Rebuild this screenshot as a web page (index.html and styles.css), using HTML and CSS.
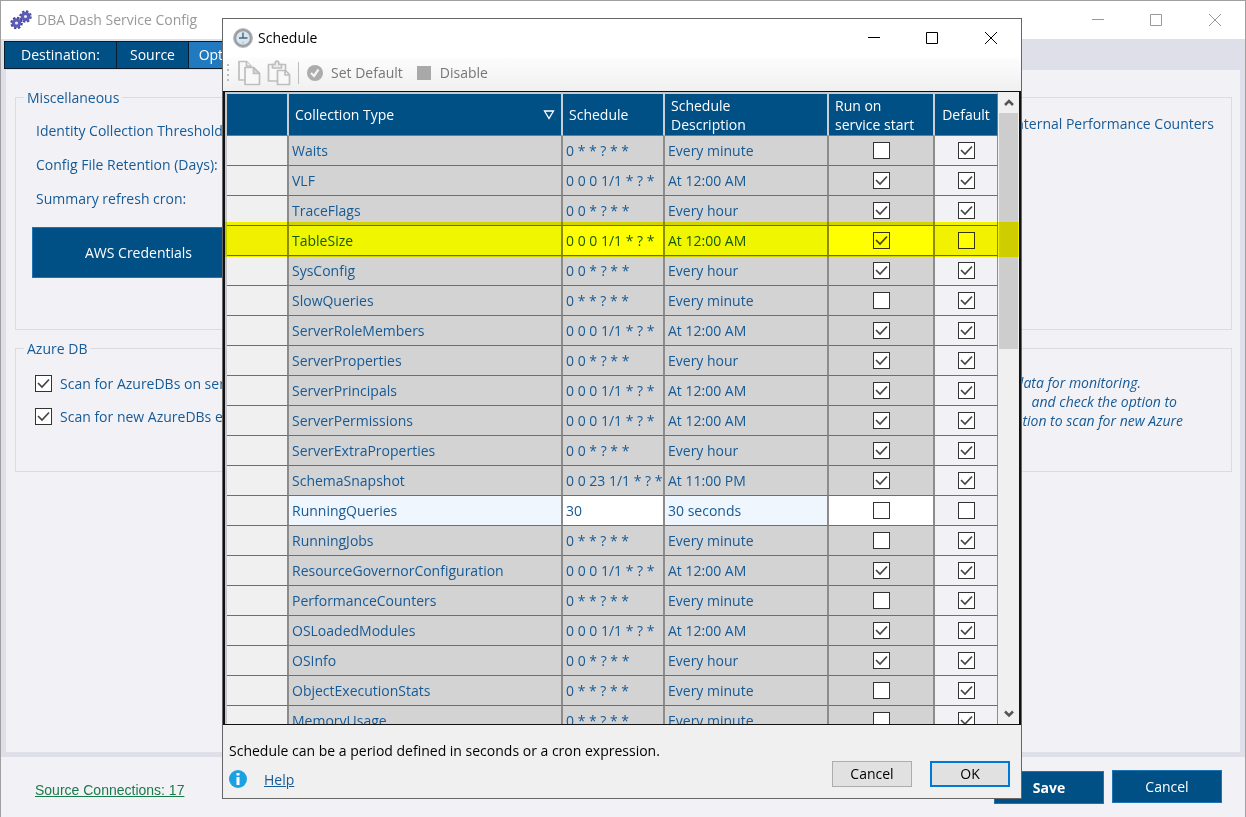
FILE: index.html
```html
<!DOCTYPE html>
<html lang="en">
<head>
<meta charset="utf-8">
<title>DBA Dash Service Config</title>
<link rel="stylesheet" href="styles.css">
</head>
<body>
<div class="app">
  <header class="titlebar">
    <svg class="app-icon" width="22" height="20" viewBox="0 0 22 20" aria-hidden="true">
      <circle cx="15.500" cy="6.500" r="5" fill="none" stroke="#4b4b9b" stroke-width="2.500" stroke-dasharray="2.200 1.720"/>
      <circle cx="15.500" cy="6.500" r="3.200" fill="#e4e4f6" stroke="#5c5cb8" stroke-width="3.200"/>
      <circle cx="6.500" cy="13" r="5" fill="none" stroke="#3f3f8c" stroke-width="2.500" stroke-dasharray="2.200 1.720"/>
      <circle cx="6.500" cy="13" r="3.200" fill="#e4e4f6" stroke="#5c5cb8" stroke-width="3.200"/>
    </svg>
    <h1 class="title">DBA Dash Service Config</h1>
    <div class="window-buttons">
      <button type="button" aria-label="Minimize"><svg width="14" height="14" viewBox="0 0 14 14"><path d="M1 6.500H13"/></svg></button>
      <button type="button" aria-label="Maximize"><svg width="14" height="14" viewBox="0 0 14 14"><path d="M1.500 1.500H12.500V12.500H1.500Z"/></svg></button>
      <button type="button" aria-label="Close"><svg width="14" height="14" viewBox="0 0 14 14"><path d="M1 1L13 13M13 1L1 13"/></svg></button>
    </div>
  </header>
  <nav class="tabs">
    <button type="button" class="tab tab-wide">Destination:</button>
    <button type="button" class="tab">Source</button>
    <button type="button" class="tab tab-active">Options</button>
  </nav>
  <main class="page">
    <fieldset class="group group-misc">
      <legend>Miscellaneous</legend>
      <div class="misc-left">
        <span>Identity Collection Threshold:</span>
        <span>Config File Retention (Days):</span>
        <span>Summary refresh cron:</span>
        <button type="button" class="primary aws">AWS Credentials</button>
      </div>
      <div class="misc-right">Internal Performance Counters</div>
    </fieldset>
    <fieldset class="group group-azure">
      <legend>Azure DB</legend>
      <div class="azure-left">
        <label><input type="checkbox" class="check" checked>Scan for AzureDBs on service start</label>
        <label><input type="checkbox" class="check" checked>Scan for new AzureDBs every</label>
      </div>
      <div class="azure-note">
        <div class="note-short">data for monitoring.</div>
        <div class="note-mid">and check the option to</div>
        <div>option to scan for new Azure</div>
      </div>
    </fieldset>
  </main>
  <footer class="footer">
    <a class="connections" href="#">Source Connections: 17</a>
    <div class="footer-actions">
      <button type="button" class="primary save">Save</button>
      <button type="button" class="primary">Cancel</button>
    </div>
  </footer>
</div>

<section class="dialog" role="dialog" aria-labelledby="dialog-title">
  <header class="titlebar dialog-titlebar">
    <svg class="dialog-icon" width="20" height="20" viewBox="0 0 20 20" aria-hidden="true">
      <circle cx="10" cy="10" r="8.200" fill="#d6e6f0" stroke="#9c9ea3" stroke-width="2.800"/>
      <circle cx="10" cy="10" r="9.400" fill="none" stroke="#b9bbbf"/>
      <path d="M10 4.500V10.500M6 10H14.500" fill="none" stroke="#4d6478" stroke-width="1.400"/>
      <path d="M10 13.500v2" stroke="#9db1c0"/>
    </svg>
    <h2 class="title" id="dialog-title">Schedule</h2>
    <div class="window-buttons">
      <button type="button" aria-label="Minimize"><svg width="14" height="14" viewBox="0 0 14 14"><path d="M1 6.500H13"/></svg></button>
      <button type="button" aria-label="Maximize"><svg width="14" height="14" viewBox="0 0 14 14"><path d="M1.500 1.500H12.500V12.500H1.500Z"/></svg></button>
      <button type="button" aria-label="Close"><svg width="14" height="14" viewBox="0 0 14 14"><path d="M1 1L13 13M13 1L1 13"/></svg></button>
    </div>
  </header>
  <div class="toolbar">
    <span class="grip"></span>
    <button type="button" aria-label="Copy"><svg width="24" height="26" viewBox="0 0 24 26" fill="#f8f8f8" stroke="#bebebe" stroke-width="1.700" stroke-linejoin="round"><path d="M8 20H2V1.500H9.500L14 6V8"/><path d="M9.500 1.500V6H14"/><path d="M8 7.500H16.500L22.500 13.500V24.500H8Z"/><path d="M16.500 7.500V13.500H22.500Z" fill="#d8d8d8"/></svg></button>
    <button type="button" aria-label="Paste"><svg width="24" height="26" viewBox="0 0 24 26" fill="#f8f8f8" stroke="#bebebe" stroke-width="1.700" stroke-linejoin="round"><path d="M1.500 4.500H18.500V21H1.500Z"/><path d="M5.500 8V4.500H8Q8 1.200 10 1.200T12 4.500H14.500V8Z" fill="#ececec"/><path d="M10.500 10.500H18.500L22.500 14.500V24.500H10.500Z"/><path d="M18 10.500V15H22.500" fill="none"/></svg></button>
    <span class="divider"></span>
    <button type="button" class="tool"><svg width="18" height="18" viewBox="0 0 18 18"><circle cx="9" cy="9" r="8" fill="#acacac"/><path d="M5 9L8 12L12.500 5.500" fill="none" stroke="#f4f4f4" stroke-width="2.200"/></svg>Set Default</button>
    <button type="button" class="tool"><span class="stop"></span>Disable</button>
  </div>
  <div class="grid">
    <div class="grid-body">
      <table>
        <colgroup><col class="c-head"><col><col class="c-schedule"><col class="c-desc"><col class="c-run"><col class="c-default"></colgroup>
        <thead>
          <tr><th></th><th><div class="sorted">Collection Type<svg width="12" height="10" viewBox="0 0 12 10"><path d="M1.500 1H10.500L6 8.500Z" fill="none" stroke="#fff" stroke-width="1.300"/></svg></div></th><th>Schedule</th><th>Schedule<br>Description</th><th>Run on<br>service start</th><th>Default</th></tr>
        </thead>
        <tbody id="rows"></tbody>
      </table>
    </div>
    <div class="scrollbar">
      <svg width="22" height="21" viewBox="0 0 22 21"><path d="M7 13L11 9L15 13" fill="none" stroke="#555" stroke-width="2.500"/></svg>
      <div class="track"><div class="thumb"></div></div>
      <svg width="22" height="21" viewBox="0 0 22 21"><path d="M7 8.500L11 12.500L15 8.500" fill="none" stroke="#555" stroke-width="2.500"/></svg>
    </div>
    <div class="marker"></div>
  </div>
  <footer class="dialog-footer">
    <p>Schedule can be a period defined in seconds or a cron expression.</p>
    <div class="dialog-actions">
      <div class="help">
        <svg width="18" height="18" viewBox="0 0 18 18" aria-hidden="true"><circle cx="9" cy="9" r="9" fill="#1ba1e2"/><path d="M9 3V5.500M9 7V15" stroke="#fff" stroke-width="3"/></svg>
        <a href="#">Help</a>
      </div>
      <button type="button" class="plain">Cancel</button>
      <button type="button" class="plain plain-ok">OK</button>
    </div>
  </footer>
</section>
<script src="rows.js"></script>
</body>
</html>
```

FILE: styles.css
```css
* { box-sizing: border-box; }
html, body { height: 100%; }
body {
  margin: 0;
  position: relative;
  overflow: hidden;
  font: 14px/19px "Open Sans", "Noto Sans", sans-serif;
  color: #165a96;
}
button { font: inherit; color: inherit; border: 0; padding: 0; background: none; }
h1, h2, p { margin: 0; font: inherit; }

.app {
  height: 100%;
  display: flex;
  flex-direction: column;
  background: #f2f2f6;
  border: 1px solid #a0a0a0;
  border-bottom: 0;
}
.titlebar {
  display: flex;
  align-items: center;
  height: 38px;
  padding-left: 9px;
  background: #fff;
  color: #999;
}
.title { flex: 1; padding: 0 0 2px 5px; }
.window-buttons { display: flex; }
.window-buttons button { width: 58px; height: 37px; display: grid; place-items: center; }
.window-buttons path { fill: none; stroke: currentColor; }
.window-buttons button:last-child { width: 60px; }

.tabs { display: flex; padding: 2px 3px; background: #dedfe9; height: 31px; }
.tab {
  height: 28px;
  width: 72px;
  padding-bottom: 2px;
  border: 1px solid #0a1c2b;
  border-left-width: 0;
  background: #004f85;
  color: #fff;
}
.tab-wide { width: 113px; border-left-width: 1px; }
.tab-active { background: #217abf; }

.page {
  flex: 1;
  min-height: 0;
  border: 5px solid #dedfe9;
  border-top: 0;
  padding: 18px 8px 0 9px;
}
.group {
  display: flex;
  justify-content: space-between;
  margin: 0;
  border: 1px solid #dcdcdc;
  white-space: nowrap;
}
.group legend { padding: 0 3px; margin-left: -8px; }
.group-misc { height: 242px; padding: 7px 17px 0 16px; }
.group-azure { height: 133px; margin-top: 9px; padding: 15px 48px 0 19px; }
.group-azure legend { margin-left: -11px; }
.misc-left { display: flex; flex-direction: column; gap: 15px; padding-top: 7px; }
.misc-left span { padding-left: 4px; }
.primary { padding-bottom: 1px; background: #004f85; color: #fff; border: 1px solid #1c74b4; }
.aws { width: 213px; height: 51px; margin-top: 4px; }
.azure-left { display: flex; flex-direction: column; gap: 14px; padding-top: 1px; }
.azure-left label { display: flex; align-items: center; gap: 8px; }
.azure-note { font-style: italic; text-align: right; }
.note-short { padding-right: 42px; }
.note-mid { padding-right: 6px; }

.check {
  appearance: none;
  display: block;
  width: 17px;
  height: 17px;
  margin: 0;
  border: 1px solid #333;
  background: #fff;
}
.check:checked {
  background: #fff url("data:image/svg+xml,%3Csvg xmlns='http://www.w3.org/2000/svg' viewBox='0 0 15 15'%3E%3Cpath d='M2 7L6 11L13 3.500' fill='none' stroke='%23444' stroke-width='1.700'/%3E%3C/svg%3E");
}

.footer { display: flex; justify-content: space-between; height: 60px; padding: 13px 23px 0 34px; }
.connections { font: 14px/40px "Liberation Sans", Arial, sans-serif; color: #1a7a4a; }
.footer-actions { display: flex; gap: 8px; }
.footer-actions .primary { width: 110px; height: 33px; }
.footer-actions .save { font-weight: 700; margin-top: 1px; }

.dialog {
  position: absolute;
  top: 18px;
  right: 224px;
  bottom: 18px;
  left: 222px;
  display: flex;
  flex-direction: column;
  background: #f0f0f0;
  border: 1px solid #666;
}
.dialog-titlebar { color: #000; padding-left: 10px; }

.toolbar {
  display: flex;
  align-items: center;
  gap: 6px;
  height: 34px;
  padding: 0 0 3px 4px;
  background: linear-gradient(#fdfdfd, #f0f0f0);
  color: #777;
}
.toolbar button { display: flex; align-items: center; gap: 7px; }
.grip { width: 2px; height: 18px; margin-right: 2px; background: repeating-linear-gradient(#bbb 0 2px, transparent 2px 5px); }
.divider { width: 1px; height: 22px; background: #bdbdbd; margin: 0 1px; }
.tool + .tool { margin-left: 8px; }
.tool .stop { margin-right: 2px; }
.stop { width: 14px; height: 14px; background: #a9a9a9; }

.grid {
  position: relative;
  flex: 1;
  min-height: 0;
  display: flex;
  border: 1px solid #111;
  border-left-width: 2px;
  border-right-width: 2px;
}
.grid-body { flex: 1; overflow: hidden; padding: 1px 0 0 2px; background: #c4c8cc; }
table { width: 100%; table-layout: fixed; border-collapse: separate; border-spacing: 0; }
.c-head { width: 62px; }
.c-schedule { width: 102px; }
.c-desc { width: 164px; }
.c-run { width: 106px; }
.c-default { width: 63px; }
th {
  height: 43px;
  padding: 0 6px;
  background: #004f85;
  color: #fff;
  font-weight: 400;
  text-align: left;
  border-top: 1px solid #c8ced3;
  border-bottom: 1px solid #777;
  border-right: 2px solid #c8ced3;
}
th:last-child { border-right: 1px solid #777; padding: 0; text-align: center; }
.sorted { display: flex; justify-content: space-between; align-items: center; }
td {
  height: 30px;
  padding: 0 3px 1px;
  background: #d3d3d3;
  border-right: 2px solid #8c8c8c;
  border-bottom: 1px solid #6e6e6e;
  white-space: nowrap;
}
td:first-child { background: #f0f0f0; }
td:last-child { background: #f2f2f6; border-right-width: 1px; }
td .check { margin: 0 auto; }
.custom td { background: #fff; }
.custom td:first-child { background: #f0f0f0; }
.custom td:nth-child(2), .custom td:nth-child(4) { background: #f0f6fd; }
.custom td:last-child { background: #f2f2f6; }

.scrollbar { display: flex; flex-direction: column; width: 21px; background: #f0f0f0; }
.track { flex: 1; }
.thumb { height: 40%; margin: 0 1px; background: #cdcdcd; }
.marker {
  position: absolute;
  top: 130px;
  left: 0;
  right: 0;
  height: 35px;
  background: #ff0;
  mix-blend-mode: multiply;
}

.dialog-footer { padding: 16px 11px 11px 6px; color: #000; }
.dialog-actions { display: flex; align-items: center; gap: 18px; height: 27px; }
.help { flex: 1; display: flex; align-items: center; gap: 17px; padding-top: 11px; }
.help a { color: #165a96; }
.plain { width: 80px; height: 26px; background: #e1e1e1; border: 1px solid #adadad; }
.plain-ok { border: 2px solid #0078d7; }
```

FILE: rows.js
```js
const MINUTE = ["0 * * ? * *", "Every minute"];
const HOUR = ["0 0 * ? * *", "Every hour"];
const DAY = ["0 0 0 1/1 * ? *", "At 12:00 AM"];

const rows = [
  ["Waits", MINUTE, false, true],
  ["VLF", DAY, true, true],
  ["TraceFlags", HOUR, true, true],
  ["TableSize", DAY, true, false],
  ["SysConfig", HOUR, true, true],
  ["SlowQueries", MINUTE, false, true],
  ["ServerRoleMembers", DAY, true, true],
  ["ServerProperties", HOUR, true, true],
  ["ServerPrincipals", DAY, true, true],
  ["ServerPermissions", DAY, true, true],
  ["ServerExtraProperties", HOUR, true, true],
  ["SchemaSnapshot", ["0 0 23 1/1 * ? *", "At 11:00 PM"], true, true],
  ["RunningQueries", ["30", "30 seconds"], false, false],
  ["RunningJobs", MINUTE, false, true],
  ["ResourceGovernorConfiguration", DAY, true, true],
  ["PerformanceCounters", MINUTE, false, true],
  ["OSLoadedModules", DAY, true, true],
  ["OSInfo", HOUR, true, true],
  ["ObjectExecutionStats", MINUTE, false, true],
  ["MemoryUsage", MINUTE, false, true]
];

const box = (label, on) =>
  `<input type="checkbox" class="check" aria-label="${label}"${on ? " checked" : ""}>`;

document.getElementById("rows").innerHTML = rows.map(([name, [cron, text], run, std]) =>
  `<tr${std ? "" : ' class="custom"'}><td></td><td>${name}</td><td>${cron}</td><td>${text}</td>` +
  `<td>${box(name + " run on service start", run)}</td><td>${box(name + " default", std)}</td></tr>`
).join("");
```
